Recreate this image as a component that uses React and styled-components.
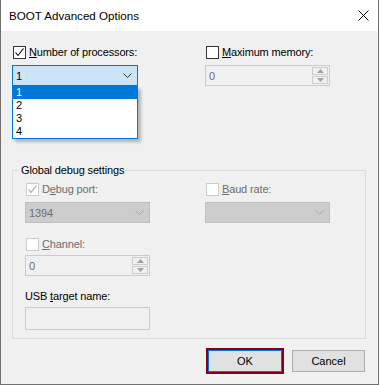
import React from 'react';
import styled, { createGlobalStyle } from 'styled-components';

const GlobalStyle = createGlobalStyle`
  html, body {
    margin: 0;
    padding: 0;
    background: #f0f0f0;
  }
  body {
    font-family: 'Liberation Sans', Arial, sans-serif;
    font-size: 11px;
    letter-spacing: -0.15px;
    color: #000;
  }
`;

const Window = styled.div`
  width: 379px;
  height: 385px;
  box-sizing: border-box;
  border: 1px solid #707070;
  border-top: none;
  background: #f0f0f0;
  display: flex;
  flex-direction: column;
`;

const TitleBar = styled.div`
  height: 31px;
  flex: none;
  background: #fff;
  display: flex;
  align-items: center;
  justify-content: space-between;
  padding: 0 9px 0 8px;
`;

const Title = styled.span`
  font-size: 11.6px;
  letter-spacing: 0;
  margin-top: -1px;
`;

const Body = styled.div`
  padding: 13px 12px 0 11px;
  display: flex;
  flex-direction: column;
`;

const Columns = styled.div`
  display: grid;
  grid-template-columns: ${(p) => p.$cols};
  column-gap: ${(p) => p.$gap}px;
  margin-top: ${(p) => p.$top || 0}px;
`;

const Field = styled.div`
  position: relative;
  display: flex;
  flex-direction: column;
`;

const CheckRow = styled.label`
  height: 16px;
  display: flex;
  align-items: center;
  gap: 3px;
  white-space: nowrap;
  color: ${(p) => (p.$disabled ? '#6d6d6d' : '#000')};
  margin-left: 1px;
`;

const Box = styled.span`
  width: 11px;
  height: 11px;
  border: 1px solid ${(p) => (p.$disabled ? '#cccccc' : '#333333')};
  background: #fff;
  display: flex;
  align-items: center;
  justify-content: center;
  flex: none;
`;

const Label = styled.div`
  height: 16px;
  line-height: 16px;
  white-space: nowrap;
  margin-top: ${(p) => p.$top || 0}px;
`;

const Combo = styled.div`
  margin-top: ${(p) => p.$top || 5}px;
  height: 21px;
  box-sizing: border-box;
  border: 1px solid ${(p) => (p.$open ? '#0078d7' : p.$disabled ? '#bfbfbf' : '#7a7a7a')};
  background: ${(p) => (p.$open ? '#cce4f7' : p.$disabled ? '#cccccc' : '#e5e5e5')};
  color: ${(p) => (p.$disabled ? '#6d6d6d' : '#000')};
  display: flex;
  align-items: center;
  justify-content: space-between;
  padding: 0 5px 0 3px;
`;

const Spinner = styled.div`
  margin-top: ${(p) => p.$top || 5}px;
  height: 21px;
  box-sizing: border-box;
  border: 1px solid #cccccc;
  background: #f0f0f0;
  color: #6d6d6d;
  display: flex;
  align-items: stretch;
  padding-left: 3px;
`;

const SpinValue = styled.span`
  flex: 1;
  display: flex;
  align-items: center;
`;

const SpinButtons = styled.div`
  width: 16px;
  display: flex;
  flex-direction: column;
  gap: 1px;
  padding: 1px 1px 1px 0;
`;

const SpinButton = styled.div`
  flex: 1;
  border: 1px solid #cccccc;
  background: #f0f0f0;
  display: flex;
  align-items: center;
  justify-content: center;
`;

const TextBox = styled.div`
  margin-top: 3px;
  height: 23px;
  box-sizing: border-box;
  border: 1px solid #cccccc;
  background: #f0f0f0;
`;

const DropList = styled.ul`
  position: absolute;
  left: 0;
  right: 0;
  top: 42px;
  margin: 0;
  padding: 0;
  list-style: none;
  background: #fff;
  border: 1px solid #0078d7;
  border-top: none;
  box-shadow: 3px 3px 3px rgba(0, 0, 0, 0.25);
  z-index: 2;
`;

const DropItem = styled.li`
  height: 13px;
  line-height: 13px;
  padding-left: 3px;
  background: ${(p) => (p.$active ? '#0078d7' : 'transparent')};
  color: ${(p) => (p.$active ? '#fff' : '#000')};
`;

const Group = styled.fieldset`
  margin: 76px 0 0 0;
  padding: 3px 0 8px 12px;
  border: 1px solid #dcdcdc;
  min-width: 0;
`;

const Legend = styled.legend`
  padding: 0 2px;
  margin-left: -6px;
  height: 16px;
  line-height: 16px;
  white-space: nowrap;
`;

const Buttons = styled.div`
  display: flex;
  justify-content: flex-end;
  gap: 10px;
  margin-top: 11px;
  padding-right: 1px;
`;

const Button = styled.button`
  width: ${(p) => p.$w}px;
  height: 22px;
  box-sizing: border-box;
  font: inherit;
  color: #000;
  background: #e1e1e1;
  border: 1px solid ${(p) => (p.$default ? '#0078d7' : '#adadad')};
  outline: ${(p) => (p.$focus ? '2px solid #800020' : 'none')};
  padding: 0;
`;

const Chevron = ({ color = '#444' }) => (
  <svg width="9" height="5" viewBox="0 0 9 5">
    <polyline points="0.5,0.5 4.5,4.5 8.5,0.5" fill="none" stroke={color} strokeWidth="1" />
  </svg>
);

const Check = ({ color }) => (
  <svg width="11" height="11" viewBox="0 0 11 11">
    <polyline points="1.5,5.5 4,8.5 9.5,1.5" fill="none" stroke={color} strokeWidth="1.1" />
  </svg>
);

const Arrow = ({ up }) => (
  <svg width="7" height="4" viewBox="0 0 7 4">
    <polygon points={up ? '0,4 7,4 3.5,0' : '0,0 7,0 3.5,4'} fill="#a0a0a0" />
  </svg>
);

const CheckBox = ({ checked, disabled, children }) => (
  <CheckRow $disabled={disabled}>
    <Box $disabled={disabled}>{checked && <Check color={disabled ? '#a0a0a0' : '#000'} />}</Box>
    <span>{children}</span>
  </CheckRow>
);

const SpinBox = ({ value, top }) => (
  <Spinner $top={top}>
    <SpinValue>{value}</SpinValue>
    <SpinButtons>
      <SpinButton><Arrow up /></SpinButton>
      <SpinButton><Arrow /></SpinButton>
    </SpinButtons>
  </Spinner>
);

export default function App() {
  return (
    <>
      <GlobalStyle />
      <Window>
        <TitleBar>
          <Title>BOOT Advanced Options</Title>
          <svg width="11" height="11" viewBox="0 0 11 11">
            <path d="M0.5 0.5 L10.5 10.5 M10.5 0.5 L0.5 10.5" stroke="#000" strokeWidth="1" />
          </svg>
        </TitleBar>
        <Body>
          <Columns $cols="126px 125px" $gap={67}>
            <Field>
              <CheckBox checked><u>N</u>umber of processors:</CheckBox>
              <Combo $open>
                <span>1</span>
                <Chevron color="#333" />
              </Combo>
              <DropList>
                <DropItem $active>1</DropItem>
                <DropItem>2</DropItem>
                <DropItem>3</DropItem>
                <DropItem>4</DropItem>
              </DropList>
            </Field>
            <Field>
              <CheckBox><u>M</u>aximum memory:</CheckBox>
              <SpinBox value="0" />
            </Field>
          </Columns>

          <Group>
            <Legend>Global debug settings</Legend>
            <Columns $cols="125px 125px" $gap={55}>
              <Field>
                <CheckBox checked disabled>D<u>e</u>bug port:</CheckBox>
                <Combo $disabled>
                  <span>1394</span>
                  <Chevron color="#a8a8a8" />
                </Combo>
              </Field>
              <Field>
                <CheckBox disabled><u>B</u>aud rate:</CheckBox>
                <Combo $disabled>
                  <span />
                  <Chevron color="#a8a8a8" />
                </Combo>
              </Field>
            </Columns>
            <Columns $cols="125px" $gap={0} $top={13}>
              <Field>
                <CheckBox disabled><u>C</u>hannel:</CheckBox>
                <SpinBox value="0" top={3} />
                <Label $top={12}>USB <u>t</u>arget name:</Label>
                <TextBox />
              </Field>
            </Columns>
          </Group>

          <Buttons>
            <Button $w={74} $default $focus>OK</Button>
            <Button $w={73}>Cancel</Button>
          </Buttons>
        </Body>
      </Window>
    </>
  );
}
